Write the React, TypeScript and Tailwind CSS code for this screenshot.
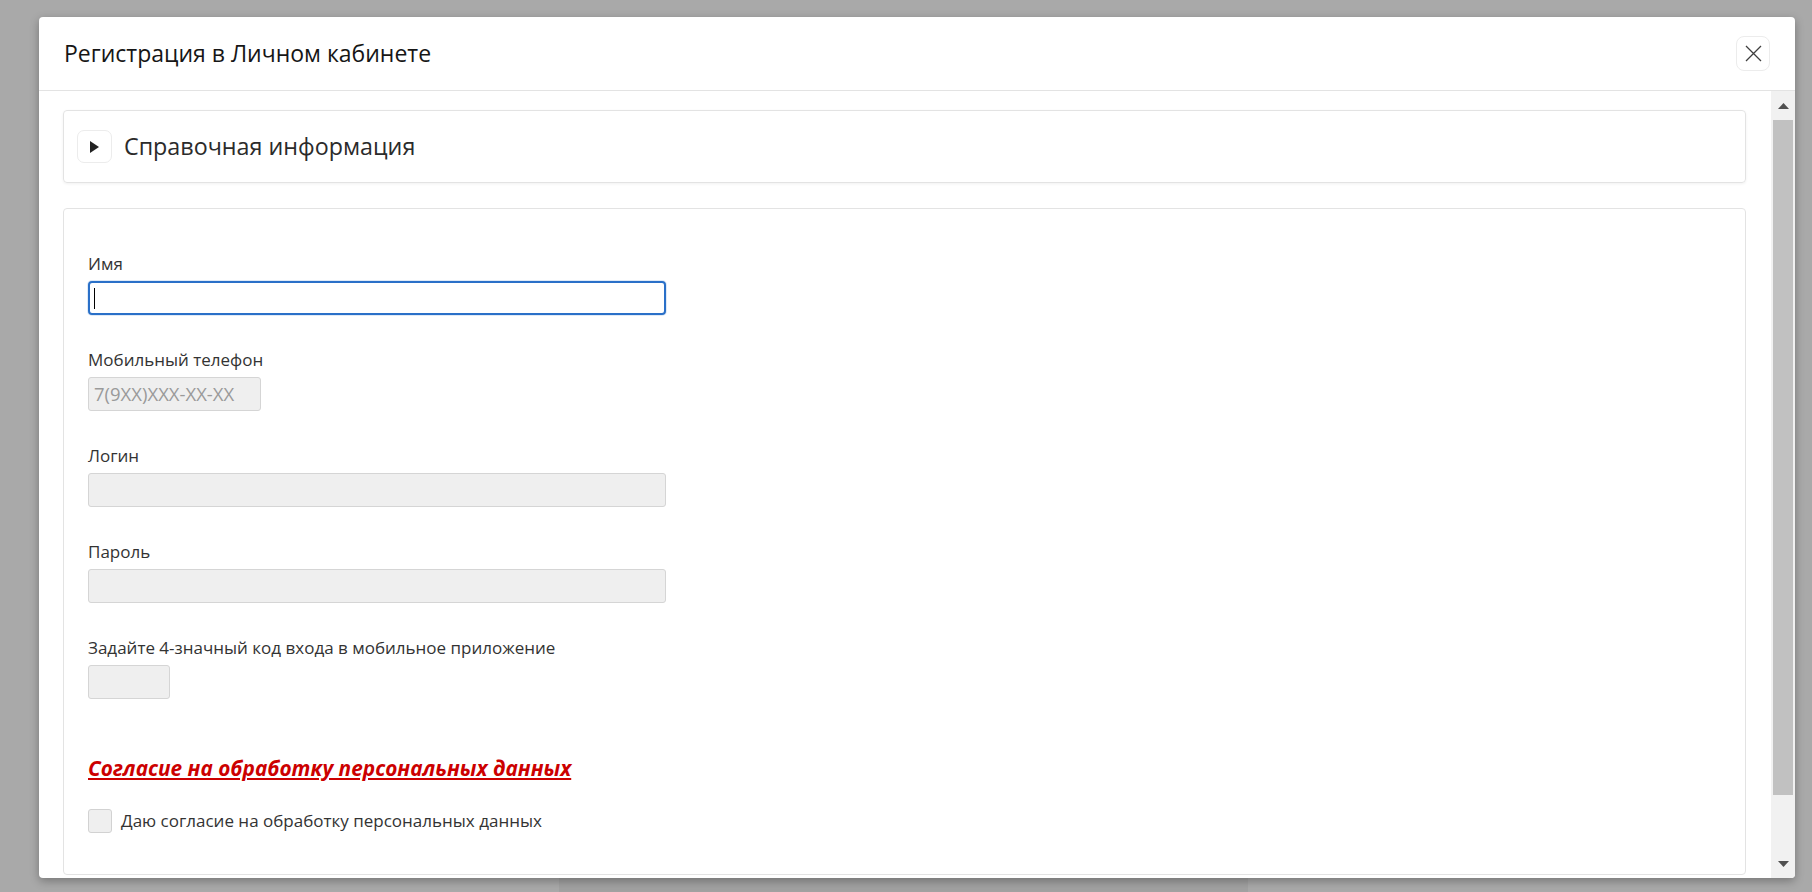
import React from 'react';

const font = { fontFamily: '"Open Sans", "Noto Sans", sans-serif' };

function CloseButton() {
  return (
    <button className="w-[34px] h-[35px] flex items-center justify-center rounded-[8px] border border-[#ececec] bg-white">
      <svg width="17" height="17" viewBox="0 0 17 17" fill="none">
        <path d="M1 1L16 16M16 1L1 16" stroke="#3f3f3f" strokeWidth="1.3" />
      </svg>
    </button>
  );
}

function Scrollbar() {
  return (
    <div className="w-[24px] shrink-0 bg-[#f1f1f1] flex flex-col">
      {/* up arrow */}
      <div className="h-[29px] flex items-center justify-center">
        <svg width="11" height="6" viewBox="0 0 11 6">
          <path d="M5.5 0L11 6H0Z" fill="#505050" />
        </svg>
      </div>
      {/* thumb */}
      <div className="h-[675px] mx-[2px] bg-[#c1c1c1]" />
      <div className="flex-1" />
      {/* down arrow */}
      <div className="h-[29px] flex items-center justify-center">
        <svg width="11" height="6" viewBox="0 0 11 6">
          <path d="M0 0H11L5.5 6Z" fill="#505050" />
        </svg>
      </div>
    </div>
  );
}

function Field({ label, width, focused, placeholder }: { label: string; width: string; focused?: boolean; placeholder?: string }) {
  return (
    <div className="mb-[33px]">
      <div className="text-[17px] leading-[24px] text-[#333] mb-[5px]">{label}</div>
      {focused ? (
        <div className={`${width} h-[34px] rounded-[4px] border-2 border-[#2a70c8] bg-white flex items-center pl-[4px] shadow-[0_0_0_1px_rgba(42,112,200,0.15)]`}>
          <span className="w-[1px] h-[21px] bg-black" />
        </div>
      ) : (
        <div className={`${width} h-[34px] rounded-[3px] border border-[#d5d5d5] bg-[#efefef] flex items-center pl-[5px]`}>
          {placeholder && <span className="text-[18.5px] text-[#9a9a9a]">{placeholder}</span>}
        </div>
      )}
    </div>
  );
}

export default function App() {
  return (
    <div className="w-[1812px] h-[892px] bg-[#a9a9a9] relative overflow-hidden" style={font}>
      {/* page panel behind the overlay */}
      <div className="absolute left-[559px] top-[700px] w-[689px] h-[192px] bg-[#a1a1a1]" />

      <div className="relative pl-[39px] pt-[17px]">
        <div className="w-[1756px] h-[861px] bg-white rounded-[4px] shadow-[0_3px_10px_rgba(0,0,0,0.3)] flex flex-col overflow-hidden">
          {/* Header */}
          <div className="h-[74px] shrink-0 border-b border-[#e3e3e3] flex items-center justify-between pl-[25px] pr-[25px]">
            <h1 className="text-[23px] text-[#161616]">Регистрация в Личном кабинете</h1>
            <CloseButton />
          </div>

          {/* Body */}
          <div className="flex flex-1 min-h-0">
            <div className="flex-1 min-w-0 overflow-hidden pl-[24px] pr-[25px] pt-[19px]">
              {/* Accordion */}
              <div className="h-[73px] border border-[#e3e3e3] rounded-[4px] shadow-[0_1px_3px_rgba(0,0,0,0.06)] flex items-center pl-[13px] gap-[12px]">
                <button className="w-[35px] h-[33px] rounded-[7px] border border-[#ececec] bg-white flex items-center justify-center">
                  <svg width="9" height="12" viewBox="0 0 9 12">
                    <path d="M0 0L9 6L0 12Z" fill="#222" />
                  </svg>
                </button>
                <span className="text-[23.3px] text-[#2b2b2b]">Справочная информация</span>
              </div>

              {/* Form */}
              <div className="mt-[25px] border border-[#e3e3e3] rounded-[4px] pl-[24px] pt-[43px] pb-[41px]">
                <Field label="Имя" width="w-[578px]" focused />
                <Field label="Мобильный телефон" width="w-[173px]" placeholder="7(9XX)XXX-XX-XX" />
                <Field label="Логин" width="w-[578px]" />
                <Field label="Пароль" width="w-[578px]" />
                <Field label="Задайте 4-значный код входа в мобильное приложение" width="w-[82px]" />

                <a className="block mt-[55px] text-[20.8px] leading-[28px] font-bold italic text-[#cc0000] underline">
                  Согласие на обработку персональных данных
                </a>

                <label className="mt-[27px] flex items-center gap-[9px]">
                  <span className="w-[24px] h-[24px] rounded-[3px] border border-[#d2d2d2] bg-[#efefef]" />
                  <span className="text-[17px] leading-[24px] text-[#333]">Даю согласие на обработку персональных данных</span>
                </label>
              </div>
            </div>
            <Scrollbar />
          </div>
        </div>
      </div>
    </div>
  );
}
